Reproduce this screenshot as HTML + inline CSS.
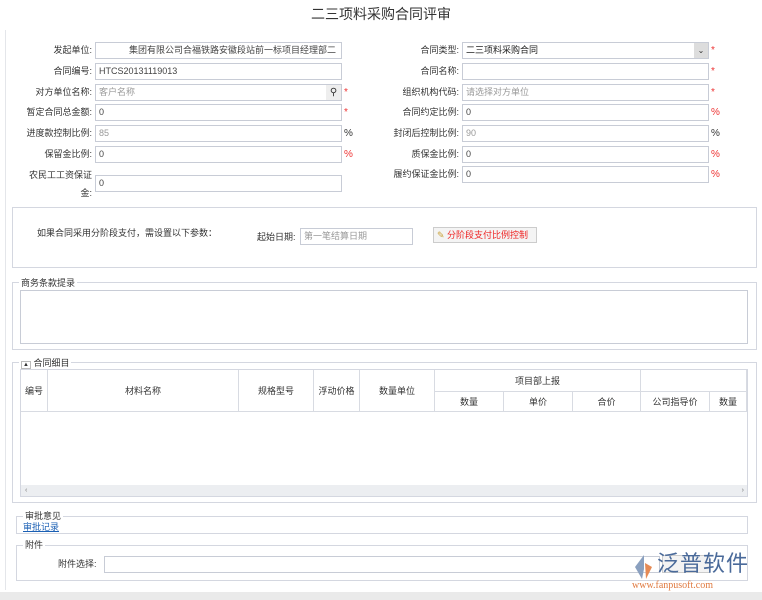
<!DOCTYPE html><html><head><meta charset="utf-8"><style>
*{margin:0;padding:0;box-sizing:border-box}
body{width:762px;height:600px;background:#fff;position:relative;overflow:hidden;font-family:"Liberation Sans","Noto Sans CJK SC",sans-serif;font-size:9px;color:#333}
.a{position:absolute}
.l{position:absolute;text-align:right;font-size:9px;color:#333;line-height:17px}
.i{position:absolute;height:17px;border:1px solid #c8ccd6;background:#fff;font-size:9px;line-height:15px;padding-left:3px;color:#444}
.g{color:#999}
.r{position:absolute;color:#e33;font-size:10px;line-height:17px}
.fs{position:absolute;border:1px solid #d4d7e0}
.lg{position:absolute;background:#fff;padding:0 2px;font-size:9px;line-height:10px;color:#333}
table{border-collapse:collapse;position:absolute;font-size:9px;color:#333}
td{border:1px solid #d8dbe2;text-align:center}
</style></head><body>
<div class="a" style="left:5px;top:30px;width:1px;height:560px;background:#e4e6ea"></div>
<div class="a" style="left:0;top:4px;width:762px;text-align:center;font-size:14px;color:#333">二三项料采购合同评审</div>

<div class="l" style="left:0;width:92px;top:42px">发起单位:</div><div class="i" style="left:95px;top:42px;width:247px">&nbsp;&nbsp;&nbsp;&nbsp;&nbsp;&nbsp;&nbsp;&nbsp;&nbsp;&nbsp;&nbsp;&nbsp;集团有限公司合福铁路安徽段站前一标项目经理部二</div>
<div class="l" style="left:0;width:92px;top:63px">合同编号:</div><div class="i" style="left:95px;top:63px;width:247px">HTCS20131119013</div>
<div class="l" style="left:0;width:92px;top:84px">对方单位名称:</div><div class="i g" style="left:95px;top:84px;width:247px">客户名称</div><div class="a" style="left:326px;top:85px;width:15px;height:15px;background:#eee;font-size:10px;text-align:center;line-height:15px">⚲</div><div class="r" style="left:344px;top:84px">*</div>
<div class="l" style="left:0;width:92px;top:104px">暂定合同总金额:</div><div class="i" style="left:95px;top:104px;width:247px">0</div><div class="r" style="left:344px;top:104px">*</div>
<div class="l" style="left:0;width:92px;top:125px">进度款控制比例:</div><div class="i g" style="left:95px;top:125px;width:247px">85</div><div class="r" style="left:344px;top:125px;color:#333">%</div>
<div class="l" style="left:0;width:92px;top:146px">保留金比例:</div><div class="i" style="left:95px;top:146px;width:247px">0</div><div class="r" style="left:344px;top:146px">%</div>
<div class="l" style="left:0;width:92px;top:166px;line-height:18px">农民工工资保证<br>金:</div><div class="i" style="left:95px;top:175px;width:247px">0</div>

<div class="l" style="left:380px;width:79px;top:42px">合同类型:</div><div class="i" style="left:462px;top:42px;width:247px;color:#222">二三项料采购合同</div><div class="a" style="left:694px;top:43px;width:14px;height:15px;background:#ddd;font-size:8px;text-align:center;line-height:15px">⌄</div><div class="r" style="left:711px;top:42px">*</div>
<div class="l" style="left:380px;width:79px;top:63px">合同名称:</div><div class="i" style="left:462px;top:63px;width:247px"></div><div class="r" style="left:711px;top:63px">*</div>
<div class="l" style="left:380px;width:79px;top:84px">组织机构代码:</div><div class="i g" style="left:462px;top:84px;width:247px">请选择对方单位</div><div class="r" style="left:711px;top:84px">*</div>
<div class="l" style="left:380px;width:79px;top:104px">合同约定比例:</div><div class="i" style="left:462px;top:104px;width:247px">0</div><div class="r" style="left:711px;top:104px">%</div>
<div class="l" style="left:380px;width:79px;top:125px">封闭后控制比例:</div><div class="i g" style="left:462px;top:125px;width:247px">90</div><div class="r" style="left:711px;top:125px;color:#333">%</div>
<div class="l" style="left:380px;width:79px;top:146px">质保金比例:</div><div class="i" style="left:462px;top:146px;width:247px">0</div><div class="r" style="left:711px;top:146px">%</div>
<div class="l" style="left:380px;width:79px;top:166px">履约保证金比例:</div><div class="i" style="left:462px;top:166px;width:247px">0</div><div class="r" style="left:711px;top:166px">%</div>

<div class="fs" style="left:12px;top:207px;width:745px;height:61px"></div>
<div class="a" style="left:37px;top:227px;line-height:12px">如果合同采用分阶段支付，需设置以下参数：</div>
<div class="a" style="left:257px;top:231px;line-height:12px">起始日期:</div>
<div class="i g" style="left:300px;top:228px;width:113px">第一笔结算日期</div>
<div class="a" style="left:433px;top:227px;width:104px;height:16px;border:1px solid #ccc;background:#f4f4f4;color:#e22;line-height:14px;padding-left:3px"><span style="color:#c9a23a">✎</span> 分阶段支付比例控制</div>

<div class="fs" style="left:12px;top:282px;width:745px;height:68px"></div>
<div class="lg" style="left:19px;top:278px">商务条款提录</div>
<div class="fs" style="left:20px;top:290px;width:728px;height:54px;border-color:#c8ccd6"></div>

<div class="fs" style="left:12px;top:362px;width:745px;height:141px"></div>
<div class="lg" style="left:19px;top:358px"><span style="border:1px solid #bbb;font-size:6px;padding:0 1px">▲</span> 合同细目</div>
<div class="fs" style="left:20px;top:369px;width:728px;height:128px;overflow:hidden">
<table style="left:-1px;top:-1px;width:727px">
<tr style="height:22px"><td rowspan="2" style="width:27px">编号</td><td rowspan="2" style="width:191px">材料名称</td><td rowspan="2" style="width:75px">规格型号</td><td rowspan="2" style="width:46px">浮动价格</td><td rowspan="2" style="width:75px">数量单位</td><td colspan="3">项目部上报</td><td colspan="2"></td></tr>
<tr style="height:20px"><td style="width:69px">数量</td><td style="width:69px">单价</td><td style="width:68px">合价</td><td style="width:69px">公司指导价</td><td>数量</td></tr>
</table>
<div class="a" style="left:0;top:115px;width:727px;height:12px;background:#eceef1;font-size:7px;color:#777;line-height:12px;padding-left:4px">‹<span style="position:absolute;right:4px">›</span></div>
</div>

<div class="fs" style="left:16px;top:516px;width:732px;height:18px"></div>
<div class="lg" style="left:23px;top:511px">审批意见</div>
<div class="a" style="left:23px;top:522px;color:#1a5fb4;text-decoration:underline;line-height:11px">审批记录</div>

<div class="fs" style="left:16px;top:545px;width:732px;height:36px"></div>
<div class="lg" style="left:23px;top:540px">附件</div>
<div class="a" style="left:58px;top:558px;line-height:12px">附件选择:</div>
<div class="i" style="left:104px;top:556px;width:556px"></div>
<div class="a" style="left:662px;top:555px;width:48px;height:18px;border:1px solid #ccc;background:#f3f3f3"></div>
<div class="a" style="left:632px;top:553px;width:20px;height:26px"><svg width="22" height="28"><path d="M12 2 L3 14 L10 26 L12 16 Z" fill="#8aa0bf"/><path d="M13 10 L20 14 L14 26 Z" fill="#e58a55"/></svg></div>
<div class="a" style="left:657px;top:551px;font-size:22px;line-height:26px;color:#4a6a9a;letter-spacing:1px">泛普软件</div>
<div class="a" style="left:632px;top:580px;font-size:10px;line-height:12px;color:#e07a40;font-family:'Liberation Serif',serif">www.fanpusoft.com</div>
<div class="a" style="left:0;top:592px;width:762px;height:8px;background:#eaeaea"></div>
</body></html>
